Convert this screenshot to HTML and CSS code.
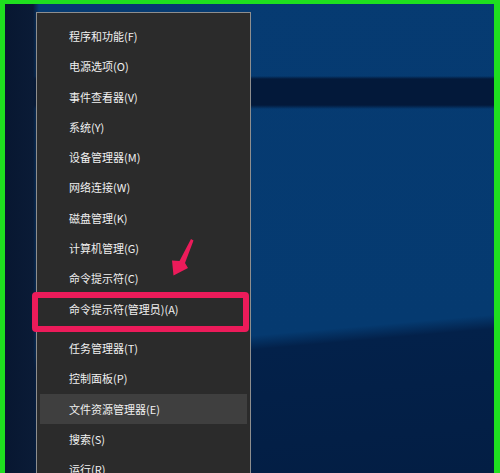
FILE: index.html
```html
<!DOCTYPE html>
<html lang="zh-CN">
<head>
<meta charset="utf-8">
<title>Win+X 菜单</title>
<link rel="stylesheet" href="styles.css">
</head>
<body>
<div class="screen">
  <div class="desktop">
    <ul class="menu">
      <li class="item">程序和功能(F)</li>
      <li class="item">电源选项(O)</li>
      <li class="item">事件查看器(V)</li>
      <li class="item">系统(Y)</li>
      <li class="item">设备管理器(M)</li>
      <li class="item">网络连接(W)</li>
      <li class="item">磁盘管理(K)</li>
      <li class="item">计算机管理(G)</li>
      <li class="item">命令提示符(C)</li>
      <li class="item">命令提示符(管理员)(A)</li>
      <li class="sep"></li>
      <li class="item">任务管理器(T)</li>
      <li class="item">控制面板(P)</li>
      <li class="item hover">文件资源管理器(E)</li>
      <li class="item">搜索(S)</li>
      <li class="item">运行(R)</li>
    </ul>
    <div class="highlight"></div>
    <svg class="arrow" width="50" height="55" viewBox="0 0 50 55">
      <polygon points="31,9 33.5,10.5 25,33 28,38 13.5,45.5 12,30.5 19.5,31" fill="#ec1b5a"/>
    </svg>
  </div>
</div>
</body>
</html>
```

FILE: styles.css
```css
html, body {
  margin: 0;
  padding: 0;
  background: #000;
}

.screen {
  width: 500px;
  height: 473px;
  box-sizing: border-box;
  border-top: 4px solid #1fe01f;
  border-left: 5px solid #1fe01f;
  border-right: 6px solid #1fe01f;
  overflow: hidden;
}

.desktop {
  position: relative;
  width: 100%;
  height: 100%;
  overflow: hidden;
  background:
    linear-gradient(to right, #081731 0, #0a1b36 28px, rgba(8,25,52,0) 34px),
    linear-gradient(to bottom, rgba(3,25,56,0) 72px, #03193a 75px, #03193a 101px, rgba(3,25,56,0) 105px),
    linear-gradient(175deg, #063b72 0, #053a70 352px, #03214a 366px, #031e44 100%);
}

.menu {
  position: absolute;
  left: 31px;
  top: 8px;
  width: 213px;
  height: 520px;
  margin: 0;
  padding: 8px 0 0;
  list-style: none;
  background: #2b2b2b;
  border: 1px solid #8e8e8e;
  font-family: "Noto Sans CJK SC", sans-serif;
  font-size: 11px;
  color: #f0f0f0;
}

.item {
  height: 30.3px;
  line-height: 30.3px;
  margin: 0 3px;
  padding-left: 29px;
  white-space: nowrap;
}

.item.hover {
  background: #3f3f3f;
}

.sep {
  height: 9px;
}

.highlight {
  position: absolute;
  left: 27px;
  top: 288px;
  width: 217px;
  height: 40px;
  box-sizing: border-box;
  border: 6px solid #ec1b5a;
  border-radius: 4px;
}

.arrow {
  position: absolute;
  left: 155px;
  top: 226px;
}
```
